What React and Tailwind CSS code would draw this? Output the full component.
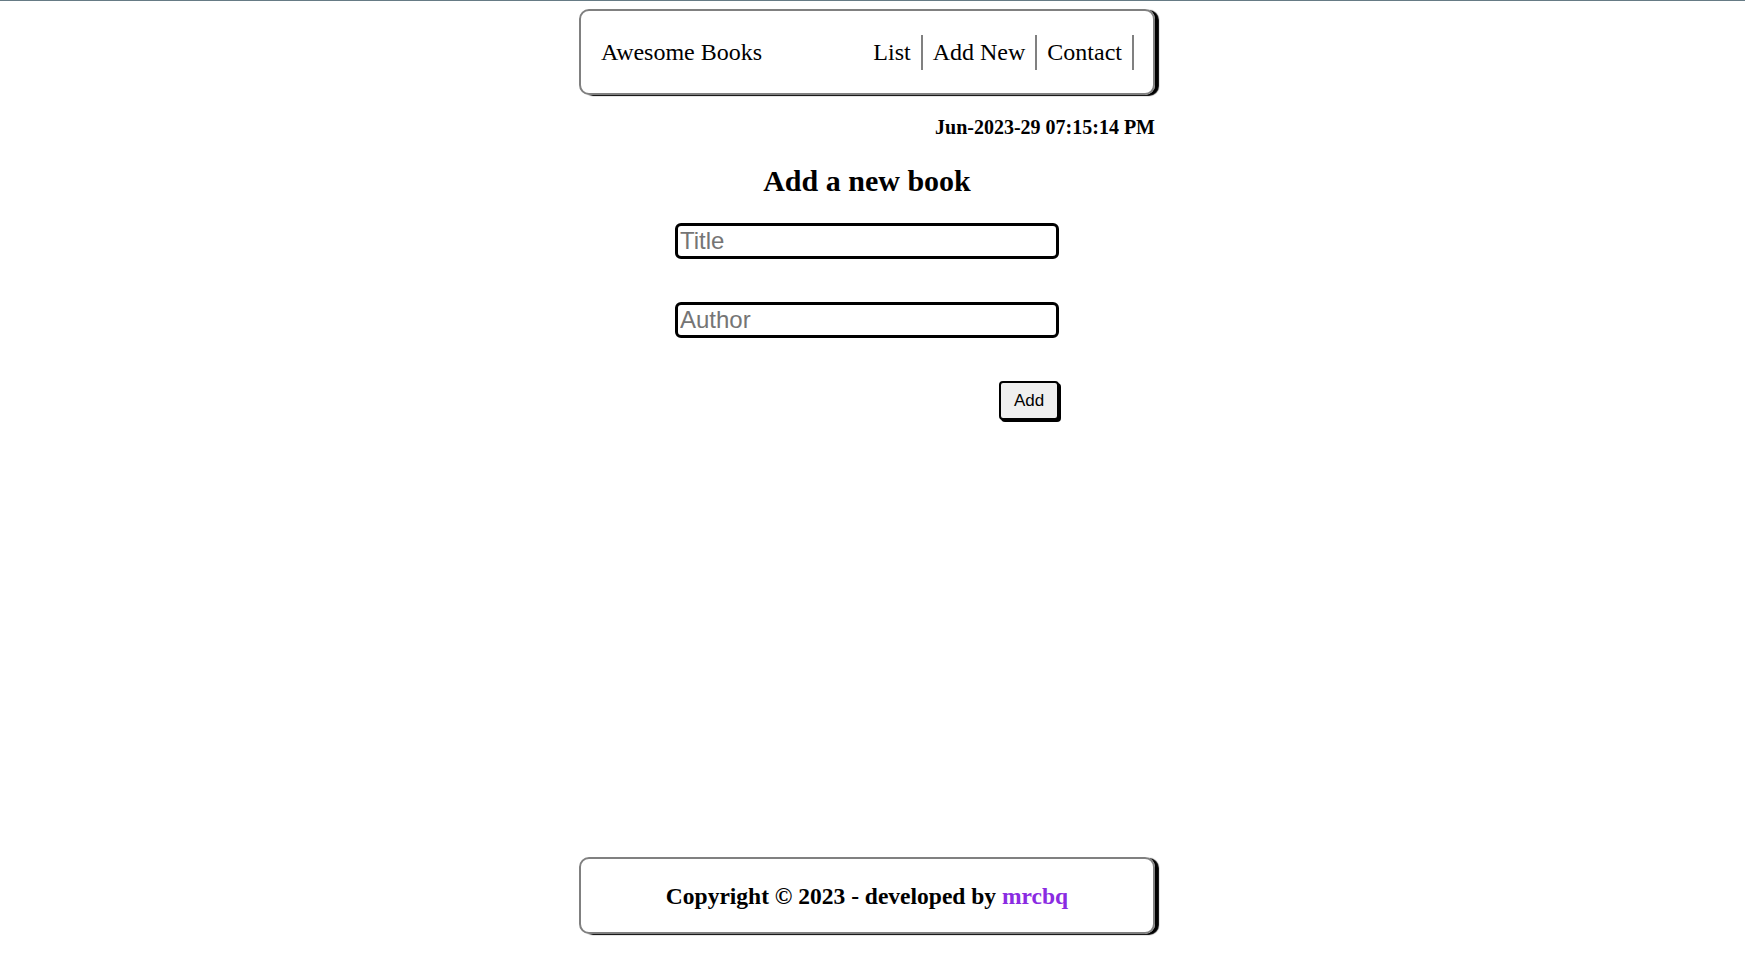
import React from 'react';

const navItems = ['List', 'Add New', 'Contact'];

const App = () => {
    return (
        <div className="h-screen flex flex-col bg-white text-black font-['Liberation_Serif',serif] overflow-hidden">
            {/* top rule */}
            <div className="h-px bg-[#667b85] shrink-0" />

            <div className="ml-[579px] w-[576px] flex flex-col flex-1">
                {/* Header */}
                <header className="mt-[8px] h-[86px] rounded-[10px] border-2 border-[#808080] shadow-[4px_1px_1px_black] flex items-center justify-between pl-5 pr-[19px]">
                    <span className="text-[24px] leading-[28px]">Awesome Books</span>
                    <ul className="flex items-center">
                        {navItems.map((item) => (
                            <li key={item} className="px-[10px] py-1 text-[24px] leading-[27px] border-r-2 border-[#808080]">
                                {item}
                            </li>
                        ))}
                    </ul>
                </header>

                {/* Date */}
                <p className="mt-[21px] text-right text-[20px] leading-[23px] font-bold">Jun-2023-29 07:15:14 PM</p>

                {/* Form */}
                <section className="flex flex-col items-center">
                    <h2 className="mt-[25px] text-[30px] leading-[34px] font-bold">Add a new book</h2>
                    <form className="mt-[25px] w-[384px] flex flex-col font-['Liberation_Sans',Arial,sans-serif]">
                        <input
                            type="text"
                            placeholder="Title"
                            className="h-[36px] border-[3px] border-black rounded-[6px] px-[2px] text-[24px] leading-[28px] placeholder:text-[#757575] outline-none"
                        />
                        <input
                            type="text"
                            placeholder="Author"
                            className="mt-[43px] h-[36px] border-[3px] border-black rounded-[6px] px-[2px] text-[24px] leading-[28px] placeholder:text-[#757575] outline-none"
                        />
                        <div className="mt-[43px] flex justify-end">
                            <button
                                type="button"
                                className="h-[39px] w-[60px] bg-[#efefef] border-2 border-black rounded-[4px] shadow-[2px_2px_0_black] text-[17px]"
                            >
                                Add
                            </button>
                        </div>
                    </form>
                </section>

                {/* Footer */}
                <footer className="mt-auto mb-[35px] h-[77px] rounded-[10px] border-2 border-[#808080] shadow-[4px_1px_1px_black] flex items-center justify-center">
                    <p className="pt-[3px] text-[23.5px] font-bold">
                        Copyright © 2023 - developed by <a href="#" className="text-[#8a2be2]">mrcbq</a>
                    </p>
                </footer>
            </div>
        </div>
    );
};

export default App;
